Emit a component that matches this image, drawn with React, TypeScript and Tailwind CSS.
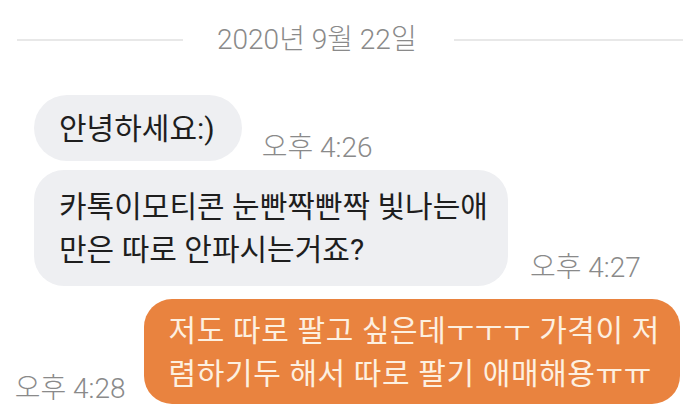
import React from "react";

export default function App() {
  return (
    <div
      className="w-[700px] h-[415px] bg-white overflow-hidden flex flex-col"
      style={{ fontFamily: "Roboto, 'Noto Sans CJK KR', sans-serif" }}
    >
      {/* date separator */}
      <div className="flex items-center pt-[23px] pl-[17px] pr-[17px] h-[57px]">
        <div className="w-[166px] h-[2px] bg-[#e8e8e8]" />
        <div className="ml-[34px] text-[28px] leading-[34px] font-light text-[#8a8a8a]">
          2020년 9월 22일
        </div>
        <div className="ml-[37px] flex-1 h-[2px] bg-[#e8e8e8]" />
      </div>

      {/* message 1 */}
      <div className="flex items-end pl-[34px] mt-[38px]">
        <div className="bg-[#eeeff2] rounded-[33px] pl-[25px] pr-[27px] h-[66px] flex items-center text-[30px] text-[#1e1e1e]">
          안녕하세요:)
        </div>
        <div className="ml-[20px] mb-[-4px] text-[28px] leading-[34px] font-light text-[#8a8a8a]">오후 4:26</div>
      </div>

      {/* message 2 */}
      <div className="flex items-end pl-[34px] mt-[9px]">
        <div className="bg-[#eeeff2] rounded-[30px] pl-[25px] pr-[20px] py-[15px] text-[30px] leading-[43px] text-[#1e1e1e]">
          카톡이모티콘 눈빤짝빤짝 빛나는애
          <br />
          만은 따로 안파시는거죠?
        </div>
        <div className="ml-[22px] mb-[1px] text-[28px] leading-[34px] font-light text-[#8a8a8a]">오후 4:27</div>
      </div>

      {/* message 3 */}
      <div className="flex items-end justify-end pr-[20px] mt-[13px]">
        <div className="mr-[18px] mb-[-2px] text-[28px] leading-[34px] font-light text-[#8a8a8a]">오후 4:28</div>
        <div className="bg-[#e9833f] rounded-[28px] pl-[25px] pr-[20px] pt-[10px] pb-[9px] text-[30px] leading-[43px] tracking-[0.6px] text-[#fdf0e0]">
          저도 따로 팔고 싶은데ㅜㅜㅜ 가격이 저
          <br />
          렴하기두 해서 따로 팔기 애매해용ㅠㅠ
        </div>
      </div>
    </div>
  );
}
